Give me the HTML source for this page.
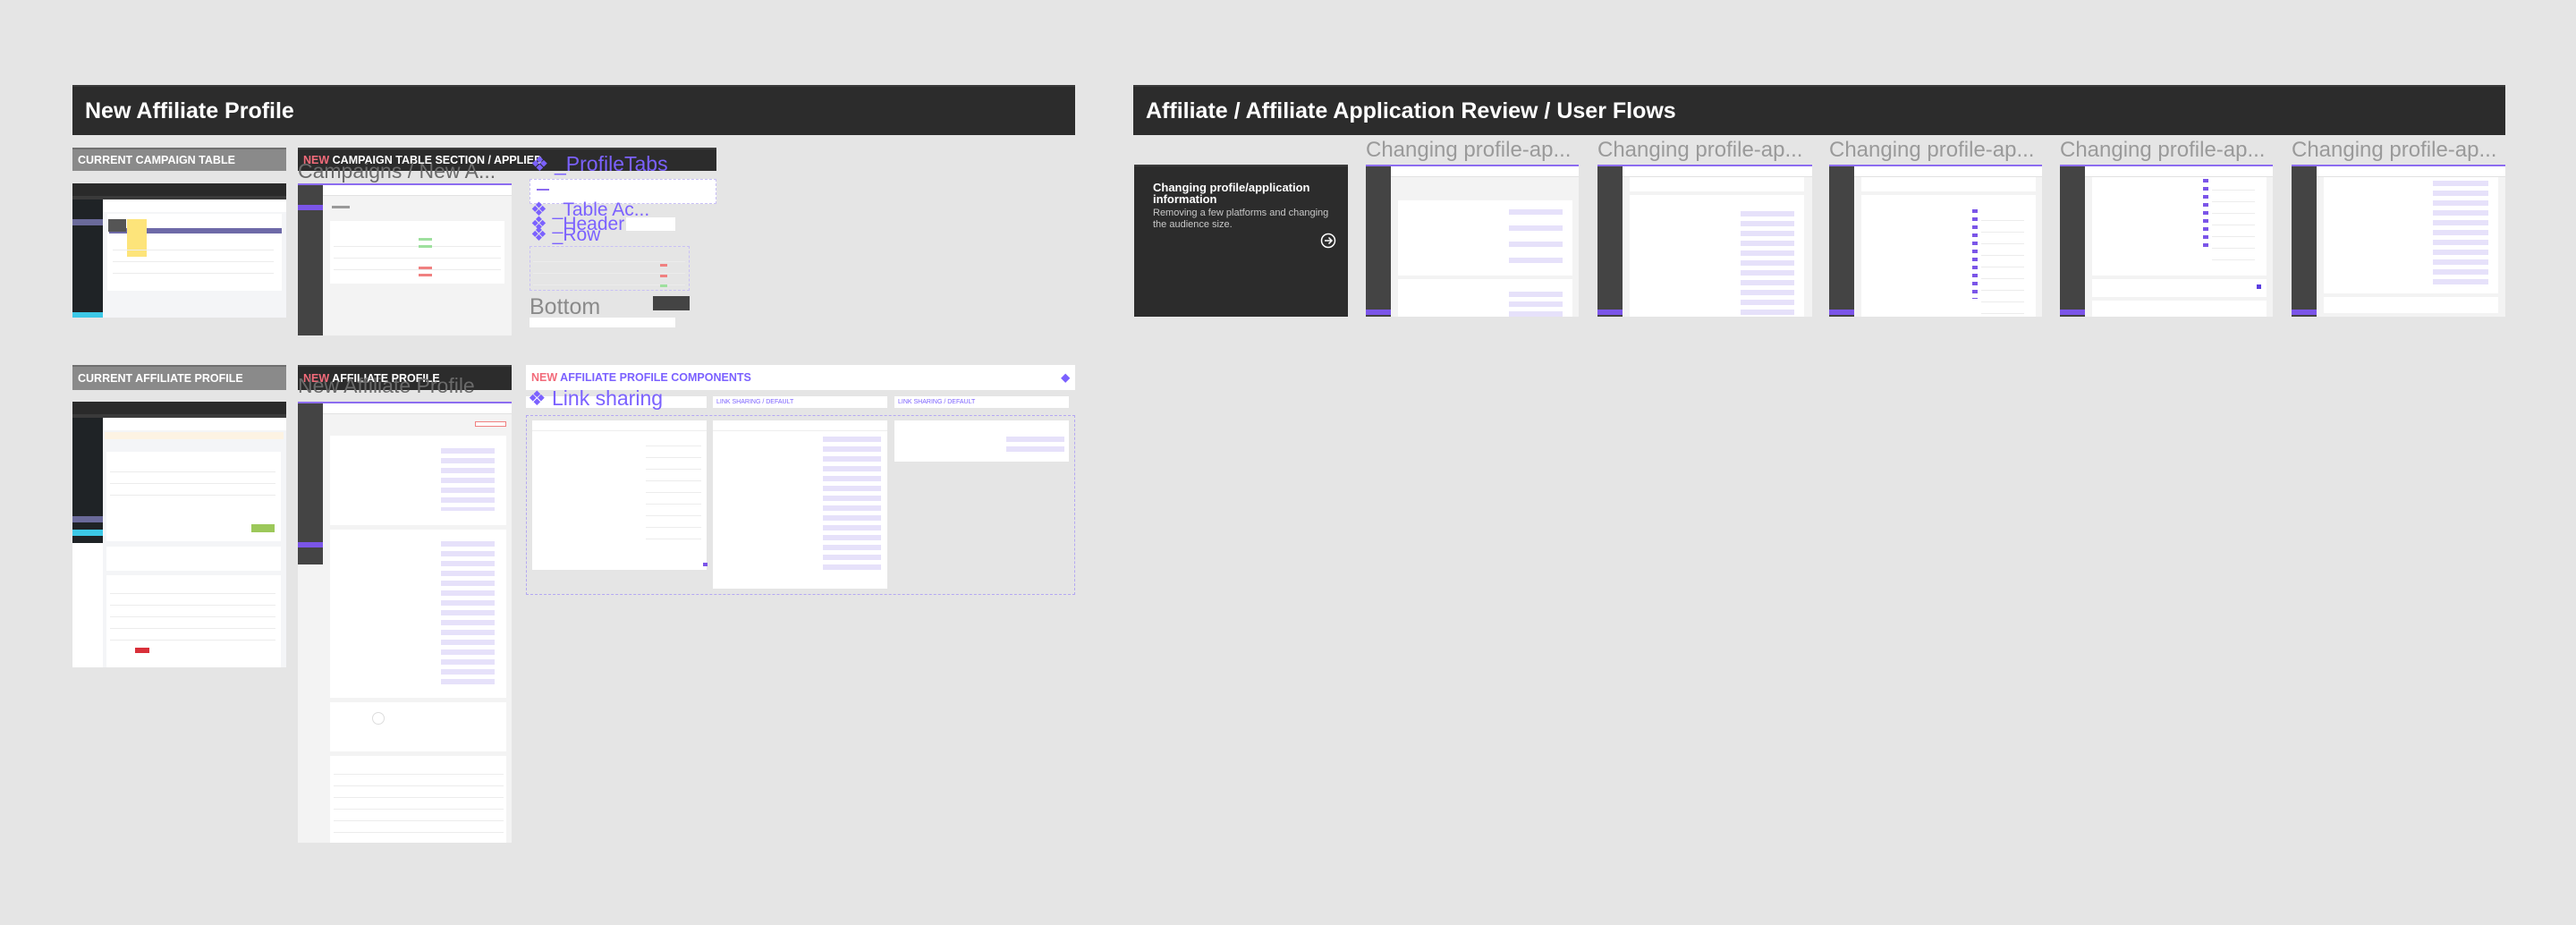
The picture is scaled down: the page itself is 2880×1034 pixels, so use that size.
<!DOCTYPE html>
<html><head><meta charset="utf-8"><style>
*{margin:0;padding:0;box-sizing:border-box}
body{width:2880px;height:1034px;background:#e5e5e5;position:relative;overflow:hidden;font-family:"Liberation Sans",sans-serif}
.a{position:absolute}
.hdr{background:#2c2c2c;border-top:2px solid #3a3a3a;color:#fff;font-weight:bold;font-size:25px;padding-left:14px;line-height:54px}
.lbl{color:#fff;font-weight:bold;font-size:12.5px;line-height:24px;padding-left:6px;white-space:nowrap;overflow:hidden}
.gray{background:#8a8a8a;border-top:2px solid #6f6f6f}
.dark{background:#2c2c2c;border-top:2px solid #3d3d3d}
.new{color:#f26b7a}
.ghost{color:#6a6a6a;font-size:23px;white-space:nowrap;line-height:1}
.comp{color:#7b61ff;font-size:23px;white-space:nowrap;line-height:1}
.app{background:#f3f3f3;overflow:hidden;border-top:2px solid #8c6cf0}
.sb{position:absolute;left:0;top:0;width:28px;bottom:0;background:#444}
.sb .act{position:absolute;left:0;width:28px;height:6px;background:#7b55e8}
.top{position:absolute;left:28px;right:0;top:0;height:12px;background:#fff;border-bottom:1px solid #e2e2e2}
.card{position:absolute;background:#fff}
.fld{position:absolute;background:repeating-linear-gradient(#e6e1fa 0 6px,transparent 6px 11px)}
.rows{position:absolute;background:repeating-linear-gradient(transparent 0 12px,#ececec 12px 13px)}
.t{font-size:24px;color:#9a9a9a;white-space:nowrap;line-height:1}
</style></head><body>

<div class="a hdr" style="left:81px;top:95px;width:1121px;height:56px">New Affiliate Profile</div>
<div class="a hdr" style="left:1267px;top:95px;width:1534px;height:56px">Affiliate / Affiliate Application Review / User Flows</div>

<div class="a lbl gray" style="left:81px;top:165px;width:239px;height:26px">CURRENT CAMPAIGN TABLE</div>
<div class="a lbl dark" style="left:333px;top:165px;width:468px;height:26px"><span class="new">NEW</span> CAMPAIGN TABLE SECTION / APPLIED</div>
<div class="a ghost" style="left:333px;top:180px">Campaigns / New A...</div>
<div class="a comp" style="left:593px;top:172px">❖ _ProfileTabs</div>

<div class="a" style="left:81px;top:205px;width:239px;height:150px;background:#f4f5f7;overflow:hidden">
 <div class="a" style="left:0;top:0;width:239px;height:14px;background:#2a2a2a"></div>
 <div class="a" style="left:0;top:14px;width:239px;height:4px;background:#3a3a3a"></div>
 <div class="a" style="left:0;top:18px;width:34px;height:132px;background:#1f2326"></div>
 <div class="a" style="left:0;top:40px;width:34px;height:7px;background:#6a6a9a"></div>
 <div class="a" style="left:0;top:144px;width:34px;height:6px;background:#3cc8e6"></div>
 <div class="a" style="left:34px;top:18px;width:205px;height:14px;background:#fff"></div>
 <div class="a" style="left:39px;top:34px;width:195px;height:86px;background:#fff"></div>
 <div class="a" style="left:41px;top:50px;width:193px;height:6px;background:#6e6aa8"></div>
 <div class="a" style="left:61px;top:40px;width:22px;height:42px;background:#fde47a"></div>
 <div class="a" style="left:40px;top:40px;width:20px;height:14px;background:#555"></div>
 <div class="rows" style="left:45px;top:62px;width:180px;height:40px"></div>
</div>

<div class="a app" style="left:333px;top:205px;width:239px;height:170px">
 <div class="sb"><div class="act" style="top:22px"></div></div><div class="top"></div>
 <div class="card" style="left:36px;top:40px;width:195px;height:70px"></div>
 <div class="rows" style="left:40px;top:56px;width:187px;height:50px"></div>
 <div class="a" style="left:135px;top:59px;width:15px;height:3px;background:#9ee09e"></div>
 <div class="a" style="left:135px;top:67px;width:15px;height:3px;background:#9ee09e"></div>
 <div class="a" style="left:135px;top:99px;width:15px;height:3px;background:#f08080"></div>
 <div class="a" style="left:135px;top:91px;width:15px;height:3px;background:#f08080"></div>
 <div class="a" style="left:38px;top:23px;width:20px;height:3px;background:#999"></div>
</div>

<div class="a" style="left:592px;top:200px;width:209px;height:28px;background:#fff;border:1px dashed #c8c0f5"></div>
<div class="a" style="left:600px;top:211px;width:14px;height:2px;background:#8c6cf0"></div>
<div class="a comp" style="left:593px;top:224px;font-size:21px">❖ _Table Ac...</div>
<div class="a comp" style="left:593px;top:240px;font-size:21px">❖ _Header</div>
<div class="a comp" style="left:593px;top:252px;font-size:21px">❖ _Row</div>
<div class="a" style="left:700px;top:243px;width:55px;height:15px;background:#fff"></div>
<div class="a" style="left:592px;top:275px;width:179px;height:50px;border:1px dashed #c8c0f5"></div>
<div class="rows" style="left:596px;top:280px;width:170px;height:42px"></div>
<div class="a" style="left:738px;top:295px;width:8px;height:3px;background:#f08080"></div>
<div class="a" style="left:738px;top:307px;width:8px;height:3px;background:#f08080"></div>
<div class="a" style="left:738px;top:318px;width:8px;height:3px;background:#9ee09e"></div>
<div class="a ghost" style="left:592px;top:331px;font-size:25px;color:#8a8a8a">Bottom</div>
<div class="a" style="left:730px;top:331px;width:41px;height:16px;background:#444"></div>
<div class="a" style="left:592px;top:355px;width:163px;height:11px;background:#fff"></div>

<div class="a lbl gray" style="left:81px;top:408px;width:239px;height:28px;line-height:26px">CURRENT AFFILIATE PROFILE</div>
<div class="a lbl dark" style="left:333px;top:408px;width:239px;height:28px;line-height:26px"><span class="new">NEW</span> AFFILIATE PROFILE</div>
<div class="a ghost" style="left:333px;top:420px">New Affiliate Profile</div>
<div class="a" style="left:588px;top:408px;width:614px;height:28px;background:#fff;font-size:12.5px;font-weight:bold;line-height:28px;padding-left:6px;color:#7b61ff"><span class="new">NEW</span> AFFILIATE PROFILE COMPONENTS<span style="position:absolute;right:6px">◆</span></div>
<div class="a" style="left:588px;top:443px;width:202px;height:13px;background:#fff"></div>
<div class="a" style="left:797px;top:443px;width:195px;height:13px;background:#fff;font-size:7px;color:#7b61ff;line-height:13px;padding-left:4px">LINK SHARING / DEFAULT</div>
<div class="a" style="left:1000px;top:443px;width:195px;height:13px;background:#fff;font-size:7px;color:#7b61ff;line-height:13px;padding-left:4px">LINK SHARING / DEFAULT</div>
<div class="a comp" style="left:590px;top:434px">❖ Link sharing</div>

<div class="a" style="left:81px;top:449px;width:239px;height:297px;background:#fff;overflow:hidden">
 <div class="a" style="left:0;top:0;width:239px;height:14px;background:#2a2a2a"></div>
 <div class="a" style="left:0;top:14px;width:239px;height:4px;background:#3a3a3a"></div>
 <div class="a" style="left:0;top:18px;width:34px;height:140px;background:#1f2326"></div>
 <div class="a" style="left:0;top:128px;width:34px;height:7px;background:#6a6a9a"></div>
 <div class="a" style="left:0;top:143px;width:34px;height:7px;background:#3cc8e6"></div>
 <div class="a" style="left:34px;top:18px;width:205px;height:280px;background:#f4f5f7"></div>
 <div class="a" style="left:34px;top:18px;width:205px;height:14px;background:#fff"></div>
 <div class="a" style="left:36px;top:34px;width:200px;height:8px;background:#fdf3e3"></div>
 <div class="card" style="left:38px;top:56px;width:195px;height:100px"></div>
 <div class="rows" style="left:42px;top:66px;width:185px;height:50px"></div>
 <div class="a" style="left:200px;top:137px;width:26px;height:9px;background:#9cc85a"></div>
 <div class="card" style="left:38px;top:162px;width:195px;height:27px"></div>
 <div class="card" style="left:38px;top:194px;width:195px;height:103px"></div>
 <div class="rows" style="left:42px;top:202px;width:185px;height:70px"></div>
 <div class="a" style="left:70px;top:275px;width:16px;height:6px;background:#d9303a"></div>
</div>

<div class="a app" style="left:333px;top:449px;width:239px;height:493px;background:#f3f3f3">
 <div class="a" style="left:0;top:0;width:28px;height:180px;background:#444"></div>
 <div class="a" style="left:0;top:155px;width:28px;height:6px;background:#7b55e8"></div>
 <div class="top"></div>
 <div class="a" style="left:198px;top:20px;width:35px;height:6px;border:1px solid #f08080;background:#fff"></div>
 <div class="card" style="left:36px;top:36px;width:197px;height:100px"></div>
 <div class="fld" style="left:160px;top:50px;width:60px;height:70px"></div>
 <div class="card" style="left:36px;top:141px;width:197px;height:188px"></div>
 <div class="fld" style="left:160px;top:154px;width:60px;height:165px"></div>
 <div class="card" style="left:36px;top:334px;width:197px;height:55px"></div>
 <div class="a" style="left:83px;top:345px;width:14px;height:14px;border:1px solid #ddd;border-radius:50%"></div>
 <div class="card" style="left:36px;top:394px;width:197px;height:99px"></div>
 <div class="rows" style="left:40px;top:402px;width:190px;height:88px"></div>
</div>

<div class="a" style="left:588px;top:464px;width:614px;height:201px;border:1px dashed #b4a8f2"></div>
<div class="card" style="left:595px;top:470px;width:195px;height:167px"></div>
<div class="a" style="left:595px;top:481px;width:195px;height:1px;background:#eee"></div>
<div class="rows" style="left:722px;top:486px;width:62px;height:120px"></div>
<div class="a" style="left:786px;top:629px;width:5px;height:4px;background:#7b55e8"></div>
<div class="card" style="left:797px;top:470px;width:195px;height:188px"></div>
<div class="a" style="left:797px;top:481px;width:195px;height:1px;background:#eee"></div>
<div class="fld" style="left:920px;top:488px;width:65px;height:150px"></div>
<div class="card" style="left:1000px;top:470px;width:195px;height:46px"></div>
<div class="fld" style="left:1125px;top:488px;width:65px;height:20px"></div>

<div class="a" style="left:1268px;top:184px;width:239px;height:170px;background:#2c2c2c;border-top:2px solid #3a3a3a"></div>
<div class="a" style="left:1289px;top:203px;width:210px;font-size:13px;font-weight:bold;color:#fff;line-height:13px">Changing profile/application<br>information</div>
<div class="a" style="left:1289px;top:232px;font-size:11px;color:#c8c8c8;line-height:13px;white-space:nowrap">Removing a few platforms and changing<br>the audience size.</div>
<svg class="a" style="left:1476px;top:260px" width="18" height="18" viewBox="0 0 18 18"><circle cx="9" cy="9" r="7.5" fill="none" stroke="#fff" stroke-width="1.5"/><path d="M5 9h8M9.5 5.5L13 9l-3.5 3.5" fill="none" stroke="#fff" stroke-width="1.5"/></svg>

<div class="a t" style="left:1527px;top:156px">Changing profile-ap...</div>
<div class="a t" style="left:1786px;top:156px">Changing profile-ap...</div>
<div class="a t" style="left:2045px;top:156px">Changing profile-ap...</div>
<div class="a t" style="left:2303px;top:156px">Changing profile-ap...</div>
<div class="a t" style="left:2562px;top:156px">Changing profile-ap...</div>

<div class="a app" style="left:1527px;top:184px;width:238px;height:170px">
 <div class="sb"><div class="act" style="top:160px"></div></div><div class="top"></div>
 <div class="card" style="left:36px;top:38px;width:195px;height:84px"></div>
 <div class="fld" style="left:160px;top:48px;width:60px;height:70px;background:repeating-linear-gradient(#e6e1fa 0 6px,transparent 6px 18px)"></div>
 <div class="card" style="left:36px;top:126px;width:195px;height:50px"></div>
 <div class="fld" style="left:160px;top:140px;width:60px;height:30px"></div>
</div>
<div class="a app" style="left:1786px;top:184px;width:240px;height:170px">
 <div class="sb"><div class="act" style="top:160px"></div></div><div class="top"></div>
 <div class="card" style="left:36px;top:12px;width:195px;height:16px"></div>
 <div class="card" style="left:36px;top:32px;width:195px;height:140px"></div>
 <div class="fld" style="left:160px;top:50px;width:60px;height:120px"></div>
</div>
<div class="a app" style="left:2045px;top:184px;width:238px;height:170px">
 <div class="sb"><div class="act" style="top:160px"></div></div><div class="top"></div>
 <div class="card" style="left:36px;top:12px;width:195px;height:16px"></div>
 <div class="card" style="left:36px;top:32px;width:195px;height:140px"></div>
 <div class="rows" style="left:170px;top:48px;width:48px;height:120px"></div>
 <div class="fld" style="left:160px;top:48px;width:6px;height:100px;background:repeating-linear-gradient(#7b55e8 0 4px,transparent 4px 9px)"></div>
</div>
<div class="a app" style="left:2303px;top:184px;width:238px;height:170px">
 <div class="sb"><div class="act" style="top:160px"></div></div><div class="top"></div>
 <div class="card" style="left:36px;top:12px;width:195px;height:110px"></div>
 <div class="rows" style="left:170px;top:14px;width:48px;height:100px"></div>
 <div class="fld" style="left:160px;top:14px;width:6px;height:80px;background:repeating-linear-gradient(#7b55e8 0 4px,transparent 4px 9px)"></div>
 <div class="card" style="left:36px;top:126px;width:195px;height:20px"></div>
 <div class="a" style="left:220px;top:132px;width:5px;height:5px;background:#5b3ee0"></div>
 <div class="card" style="left:36px;top:150px;width:195px;height:20px"></div>
</div>
<div class="a app" style="left:2562px;top:184px;width:239px;height:170px">
 <div class="sb"><div class="act" style="top:160px"></div></div><div class="top"></div>
 <div class="card" style="left:36px;top:12px;width:195px;height:130px"></div>
 <div class="fld" style="left:158px;top:16px;width:62px;height:120px"></div>
 <div class="card" style="left:36px;top:146px;width:195px;height:18px"></div>
</div>
</body></html>
